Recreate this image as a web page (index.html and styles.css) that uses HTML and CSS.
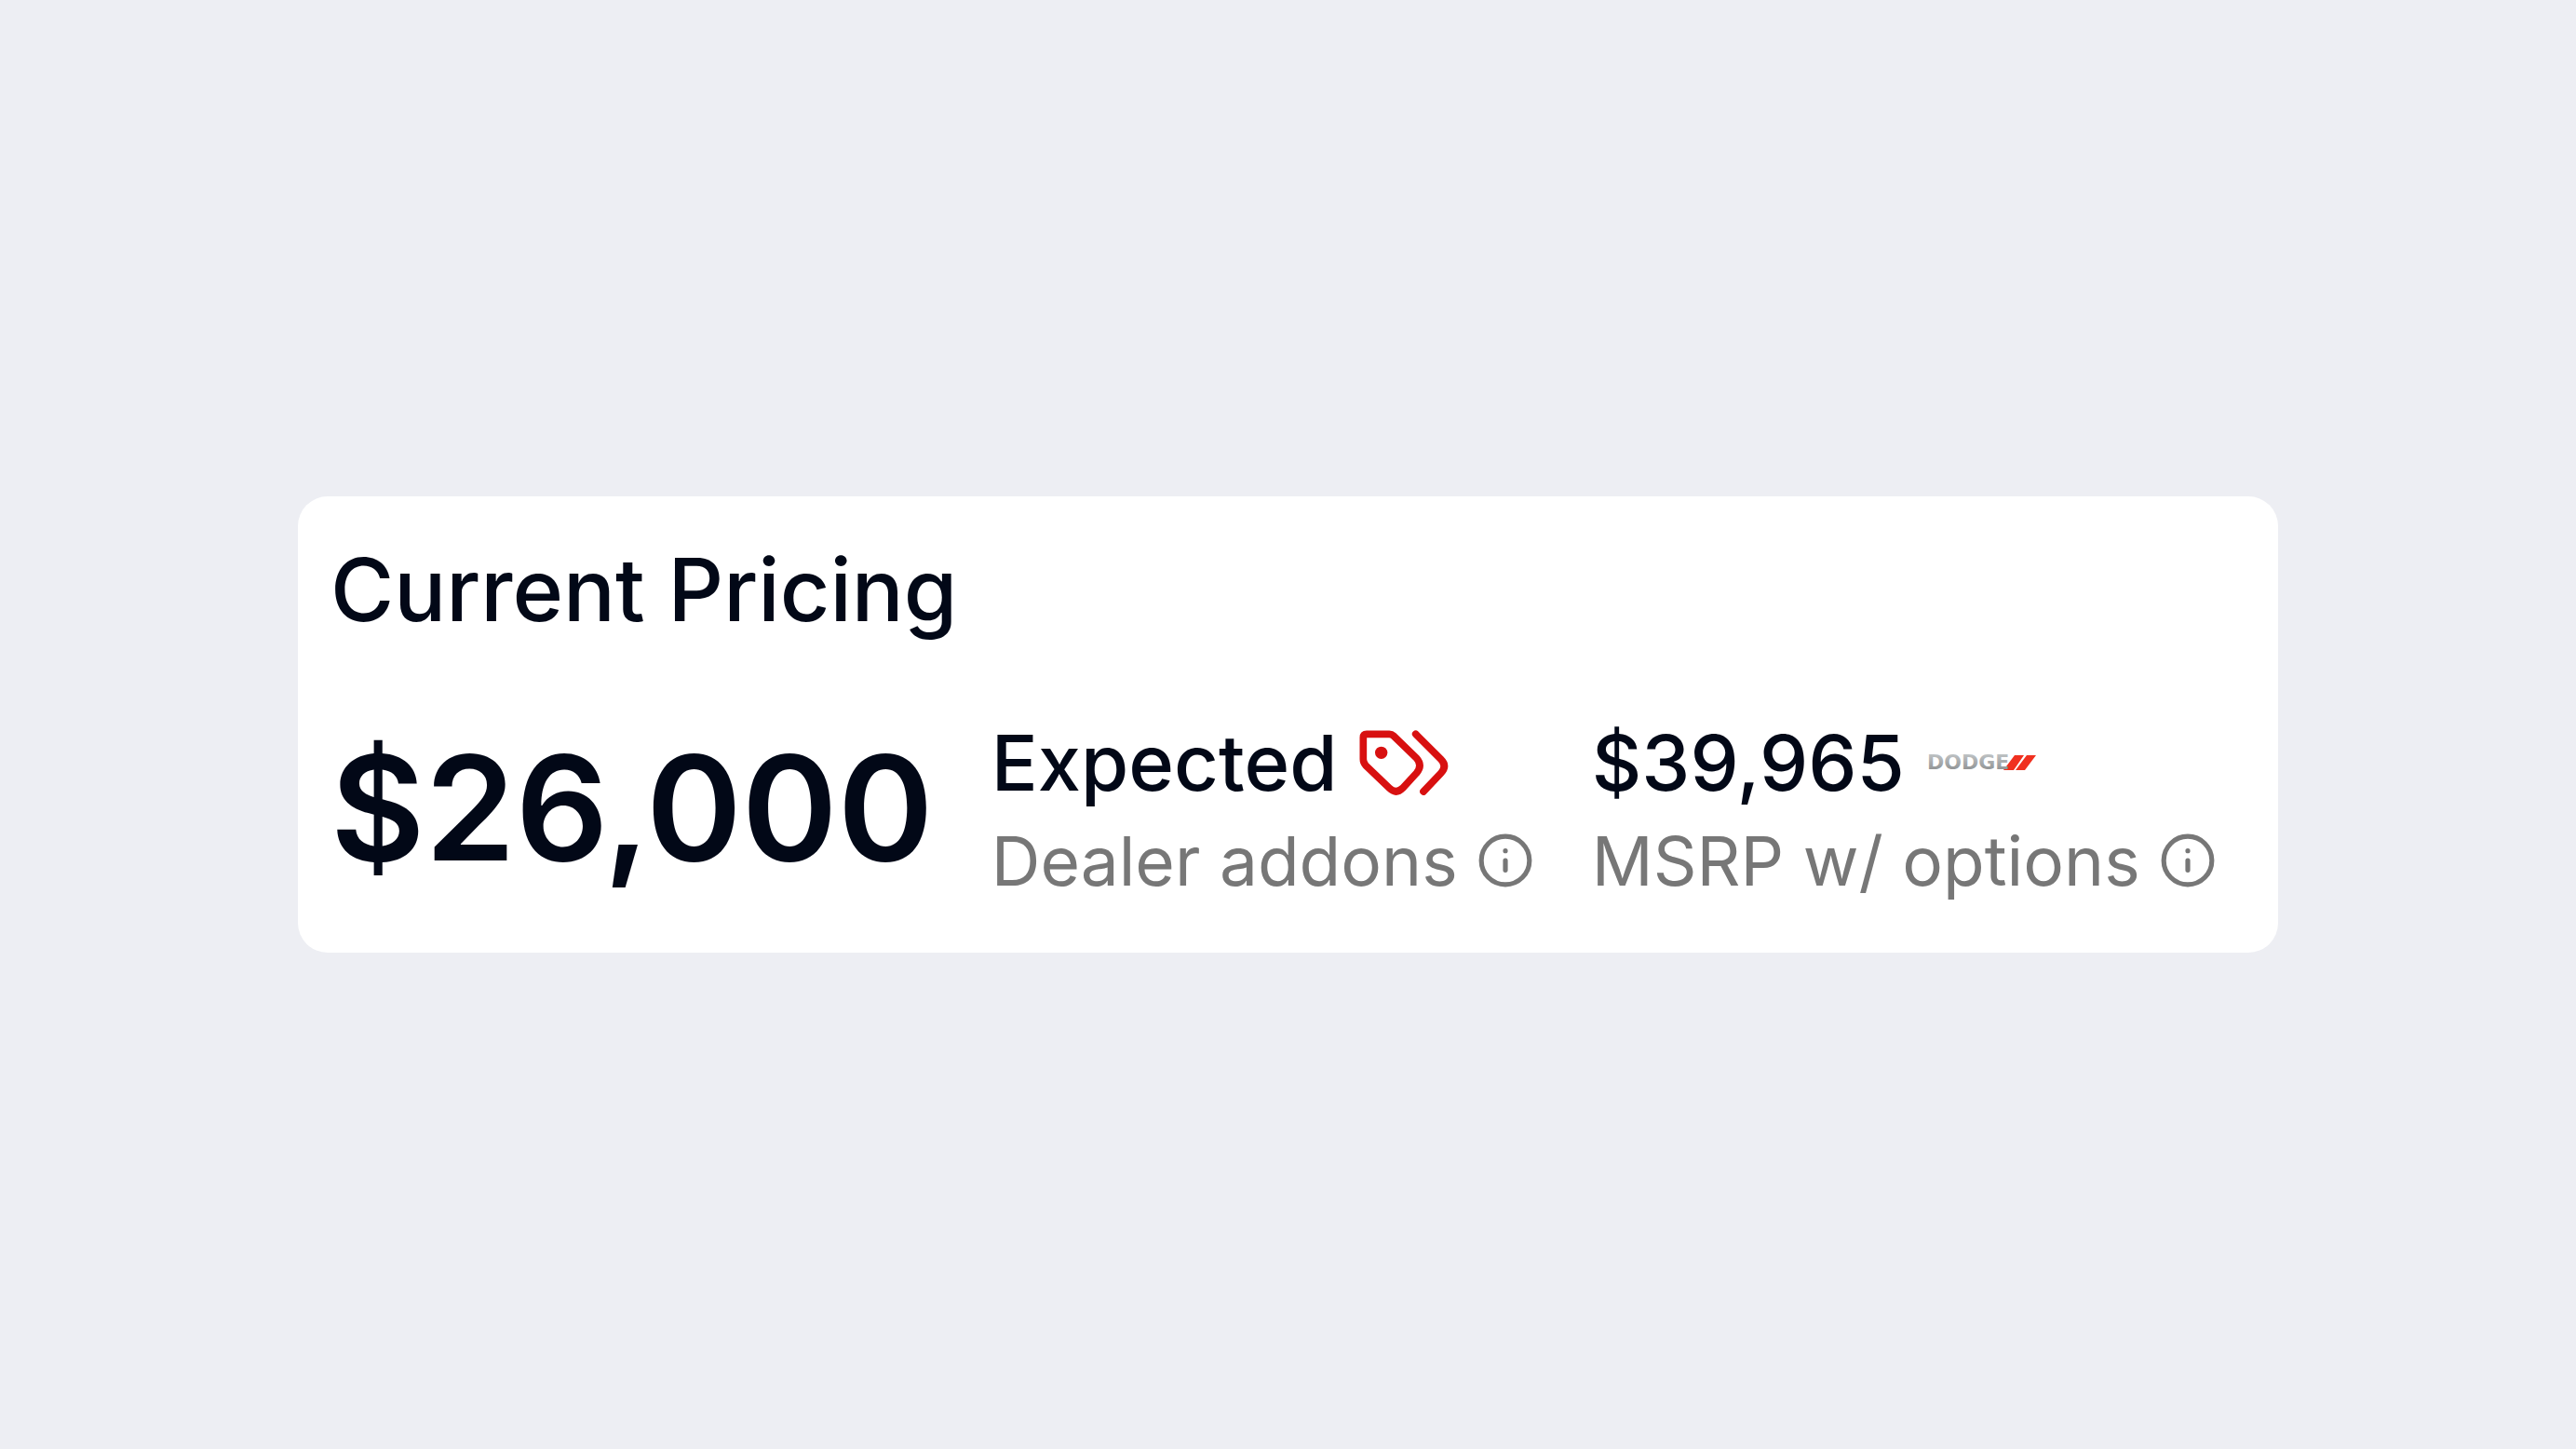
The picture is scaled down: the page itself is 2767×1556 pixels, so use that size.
FILE: index.html
```html
<!DOCTYPE html>
<html lang="en">
<head>
<meta charset="utf-8">
<title>Current Pricing</title>
<link rel="stylesheet" href="styles.css">
</head>
<body>
<main class="page">
  <section class="card">
    <h1 class="card-title">Current Pricing</h1>
    <div class="pricing">
      <p class="price">$26,000</p>
      <div class="detail">
        <div class="detail-value">
          <span>Expected</span>
          <svg class="tags" viewBox="63 48 288 210" fill="none" stroke="#d81010" stroke-width="23" stroke-linecap="round" stroke-linejoin="round" aria-hidden="true">
            <path d="M87 61H160Q168 61 173 66L248 139Q268 162 248 186L203 235Q182 256 160 235L84 162Q76 153 76 142V72Q76 61 87 61Z"/>
            <path d="M245 61L326 142Q348 164 326 187L270 246"/>
            <circle cx="134" cy="121" r="20" fill="#d81010" stroke="none"/>
          </svg>
        </div>
        <div class="detail-label">
          <span>Dealer addons</span>
          <button class="info" type="button" aria-label="About dealer addons">
            <svg class="info-icon" viewBox="0 0 24 24" aria-hidden="true"><circle cx="12" cy="12" r="10"/><path d="M12 16v-4M12 8h.01"/></svg>
          </button>
        </div>
      </div>
      <div class="detail">
        <div class="detail-value">
          <span>$39,965</span>
          <svg class="brand" viewBox="0 0 120 24" role="img" aria-label="Dodge">
            <defs>
              <linearGradient id="chrome" x1="0" y1="0" x2="0" y2="1">
                <stop offset="0" stop-color="#c9cdcf"/>
                <stop offset="1" stop-color="#858889"/>
              </linearGradient>
            </defs>
            <path fill="#f0301f" d="M94 4h10l-11 16h-11zM107 4h10l-12 16h-10z"/>
            <text class="brand-name" x="0" y="19" fill="url(#chrome)">DODGE</text>
          </svg>
        </div>
        <div class="detail-label">
          <span>MSRP w/ options</span>
          <button class="info" type="button" aria-label="About MSRP with options">
            <svg class="info-icon" viewBox="0 0 24 24" aria-hidden="true"><circle cx="12" cy="12" r="10"/><path d="M12 16v-4M12 8h.01"/></svg>
          </button>
        </div>
      </div>
    </div>
  </section>
</main>
</body>
</html>
```
FILE: styles.css
```css
* {
  box-sizing: border-box;
}

body {
  margin: 0;
  background: #edeef3;
  color: #020817;
  font-family: Inter, "Liberation Sans", sans-serif;
}

.page {
  display: flex;
  align-items: center;
  min-height: 100vh;
  padding: 0 320px;
}

.card {
  flex: 1;
  padding: 27px 35px 48px;
  border-radius: 32px;
  background: #fff;
}

.card-title {
  margin: 0 0 63px;
  font-size: 93px;
  font-weight: 500;
  line-height: 146px;
}

.pricing {
  display: flex;
  align-items: flex-start;
  gap: 62px;
  white-space: nowrap;
}

.price {
  margin: 0;
  font-size: 156px;
  font-weight: 600;
  line-height: 198px;
}

.detail-value,
.detail-label {
  display: flex;
  align-items: center;
}

.detail-value {
  gap: 24px;
  height: 100px;
  font-size: 83px;
  font-weight: 500;
}

.detail-label {
  gap: 20px;
  height: 106px;
  padding-top: 4px;
  color: #777;
  font-size: 73px;
}

.tags {
  width: 96px;
  height: 70px;
}

.brand {
  width: 120px;
  height: 24px;
}

.brand-name {
  font: bold 22px "DejaVu Sans", sans-serif;
}

.info {
  display: flex;
  padding: 0;
  border: 0;
  background: none;
  color: inherit;
}

.info-icon {
  width: 62px;
  height: 62px;
  fill: none;
  stroke: currentColor;
  stroke-width: 2;
  stroke-linecap: round;
  stroke-linejoin: round;
}
```
